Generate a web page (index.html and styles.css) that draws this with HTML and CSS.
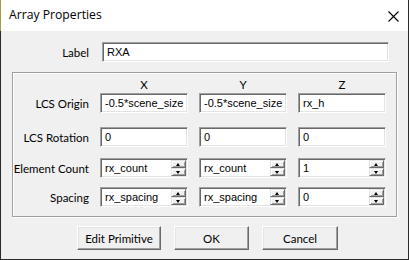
FILE: index.html
```html
<!DOCTYPE html>
<html lang="en">
<head>
    <meta charset="UTF-8">
    <title>Array Properties</title>
    <link rel="stylesheet" href="styles.css">
</head>
<body>
    <div class="window">
        <div class="titlebar">
            <span class="title">Array Properties</span>
            <svg class="close" width="11" height="11" viewBox="0 0 11 11">
                <path d="M0.5 0.5 L10.5 10.5 M10.5 0.5 L0.5 10.5" stroke="#000" stroke-width="1.1" fill="none"/>
            </svg>
        </div>
        <div class="content">
            <div class="label-row">
                <span class="caption">Label</span>
                <div class="edit">RXA</div>
            </div>

            <div class="group">
                <div class="row head">
                    <span></span>
                    <span>X</span>
                    <span>Y</span>
                    <span>Z</span>
                </div>
                <div class="row origin">
                    <span class="caption">LCS Origin</span>
                    <div class="edit">-0.5*scene_size</div>
                    <div class="edit">-0.5*scene_size</div>
                    <div class="edit">rx_h</div>
                </div>
                <div class="row rotation">
                    <span class="caption">LCS Rotation</span>
                    <div class="edit">0</div>
                    <div class="edit">0</div>
                    <div class="edit">0</div>
                </div>
                <div class="row count">
                    <span class="caption">Element Count</span>
                    <div class="edit spin"><span>rx_count</span><div class="spinner"><i class="up"></i><i class="down"></i></div></div>
                    <div class="edit spin"><span>rx_count</span><div class="spinner"><i class="up"></i><i class="down"></i></div></div>
                    <div class="edit spin"><span>1</span><div class="spinner"><i class="up"></i><i class="down"></i></div></div>
                </div>
                <div class="row spacing">
                    <span class="caption">Spacing</span>
                    <div class="edit spin"><span>rx_spacing</span><div class="spinner"><i class="up"></i><i class="down"></i></div></div>
                    <div class="edit spin"><span>rx_spacing</span><div class="spinner"><i class="up"></i><i class="down"></i></div></div>
                    <div class="edit spin"><span>0</span><div class="spinner"><i class="up"></i><i class="down"></i></div></div>
                </div>
            </div>

            <div class="buttons">
                <button class="btn edit-prim">Edit Primitive</button>
                <button class="btn ok">OK</button>
                <button class="btn cancel">Cancel</button>
            </div>
        </div>
    </div>
</body>
</html>
```

FILE: styles.css
```css
body {
    margin: 0;
    font-family: Lato, "Liberation Sans", Arial, sans-serif;
    font-size: 11.5px;
    color: #000;
    background: #fff;
}

.window {
    width: 409px;
    height: 260px;
    display: flex;
    flex-direction: column;
}

.titlebar {
    height: 31px;
    flex: none;
    background: #fff;
    border-left: 1px solid #a39f3e;
    border-right: 1px solid #2b2b2b;
    display: flex;
    align-items: center;
    justify-content: space-between;
    padding: 0 9px 0 8px;
}

.title {
    font-family: "Open Sans", Lato, sans-serif;
    font-size: 12.2px;
    margin-top: -2px;
}

.close {
    display: block;
    margin-top: 1px;
}

.content {
    flex: 1;
    background: #f0f0f0;
    border: 1px solid #2b2b2b;
    border-top: none;
    padding: 11px 0 0 11px;
}

.label-row {
    display: grid;
    grid-template-columns: 77px 287px;
    column-gap: 13px;
    align-items: center;
}

.caption {
    text-align: right;
}

/* sunken text box */
.edit {
    height: 20px;
    box-sizing: border-box;
    background: #fff;
    border-top: 1px solid #a0a0a0;
    border-left: 1px solid #a0a0a0;
    border-right: 1px solid #fff;
    border-bottom: 1px solid #fff;
    box-shadow: inset 1px 1px 0 #696969, inset -1px -1px 0 #e3e3e3;
    padding-left: 4px;
    line-height: 18px;
    font-family: "Liberation Sans", Arial, sans-serif;
    font-size: 11px;
    white-space: nowrap;
    overflow: hidden;
}

.group {
    width: 385px;
    box-sizing: border-box;
    margin-top: 10px;
    border: 1px solid #a0a0a0;
    box-shadow: inset 1px 1px 0 #fff, 1px 1px 0 #fff;
    padding-bottom: 9px;
}

.row {
    display: grid;
    grid-template-columns: 76px 88px 88px 88px;
    column-gap: 11px;
    align-items: center;
    height: 20px;
}

.row.head {
    height: 14px;
    margin-top: 4px;
    text-align: center;
}

.row.origin { margin-top: 2px; }
.row.rotation { margin-top: 14px; }
.row.count { margin-top: 11px; }
.row.spacing { margin-top: 9px; }

.edit.spin {
    display: flex;
    justify-content: space-between;
    padding-right: 1px;
}

.spinner {
    width: 15px;
    display: flex;
    flex-direction: column;
    padding-top: 1px;
}

.spinner i {
    height: 8px;
    box-sizing: border-box;
    background: #f0f0f0;
    border-top: 1px solid #e3e3e3;
    border-left: 1px solid #e3e3e3;
    border-right: 1px solid #696969;
    border-bottom: 1px solid #696969;
    box-shadow: inset 1px 1px 0 #fff, inset -1px -1px 0 #a0a0a0;
    position: relative;
}

.spinner i::after {
    content: "";
    position: absolute;
    left: 4px;
    top: 2px;
    border-left: 2.5px solid transparent;
    border-right: 2.5px solid transparent;
}

.spinner .up::after {
    border-bottom: 3px solid #000;
}

.spinner .down::after {
    border-top: 3px solid #000;
}

.buttons {
    display: flex;
    margin-top: 9px;
    padding-left: 65px;
    gap: 13px;
}

.btn {
    height: 24px;
    box-sizing: border-box;
    background: #f0f0f0;
    border: 1px solid;
    border-color: #fff #696969 #696969 #fff;
    box-shadow: inset -1px -1px 0 #a0a0a0, inset 1px 1px 0 #e3e3e3;
    font-family: Lato, "Liberation Sans", Arial, sans-serif;
    font-size: 11.5px;
    color: #000;
    padding: 0;
}

.edit-prim { width: 84px; }
.ok { width: 75px; }
.cancel { width: 76px; }
```
